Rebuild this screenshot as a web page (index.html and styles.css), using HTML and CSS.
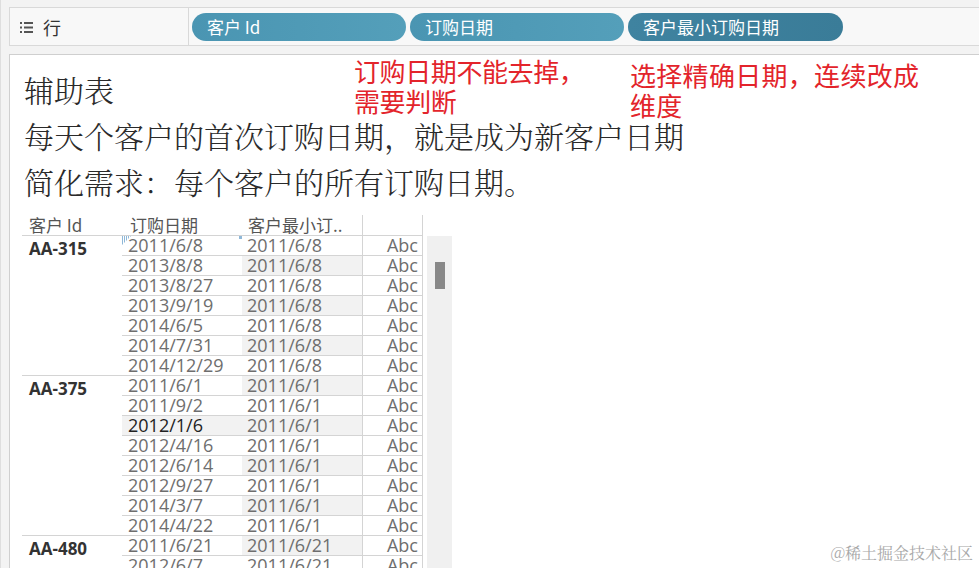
FILE: index.html
```html
<!DOCTYPE html>
<html lang="zh">
<head>
<meta charset="utf-8">
<link rel="stylesheet" href="styles.css">
</head>
<body>
<div class="app">
  <div class="shelf">
    <div class="shelf-label">
      <svg class="list-icon" width="13" height="11" viewBox="0 0 13 11">
        <rect x="0" y="0" width="2" height="2" fill="#555"/>
        <rect x="4" y="0" width="9" height="2" fill="#555"/>
        <rect x="0" y="4.5" width="2" height="2" fill="#555"/>
        <rect x="4" y="4.5" width="9" height="2" fill="#555"/>
        <rect x="0" y="9" width="2" height="2" fill="#555"/>
        <rect x="4" y="9" width="9" height="2" fill="#555"/>
      </svg>
      <span class="shelf-title">行</span>
    </div>
    <div class="pills">
      <div class="pill">客户 Id</div>
      <div class="pill">订购日期</div>
      <div class="pill dark">客户最小订购日期</div>
    </div>
  </div>

  <div class="panel">
    <div class="notes">
      <div class="note-line">辅助表</div>
      <div class="note-line">每天个客户的首次订购日期，就是成为新客户日期</div>
      <div class="note-line">简化需求：每个客户的所有订购日期。</div>
    </div>

    <div class="anno anno-1">订购日期不能去掉，<br>需要判断</div>
    <div class="anno anno-2">选择精确日期，连续改成<br>维度</div>

    <div class="view">
      <div class="table">
        <div class="thead">
          <div class="th c1">客户 Id</div>
          <div class="th c2">订购日期</div>
          <div class="th c3">客户最小订..</div>
          <div class="th c4"></div>
        </div>

        <div class="group">
          <div class="gkey">AA-315</div>
          <div class="rows">
            <div class="row"><div class="td c2 sel">2011/6/8<svg class="mark-l" width="9" height="9" viewBox="0 0 9 9"><defs><pattern id="h" width="2" height="2" patternUnits="userSpaceOnUse"><rect width="1" height="2" fill="#8fb8d8"/></pattern></defs><polygon points="0,0 9,0 0,9" fill="url(#h)"/></svg><span class="mark-r"></span></div><div class="td c3">2011/6/8</div><div class="td c4">Abc</div></div>
            <div class="row even"><div class="td c2">2013/8/8</div><div class="td c3">2011/6/8</div><div class="td c4">Abc</div></div>
            <div class="row"><div class="td c2">2013/8/27</div><div class="td c3">2011/6/8</div><div class="td c4">Abc</div></div>
            <div class="row even"><div class="td c2">2013/9/19</div><div class="td c3">2011/6/8</div><div class="td c4">Abc</div></div>
            <div class="row"><div class="td c2">2014/6/5</div><div class="td c3">2011/6/8</div><div class="td c4">Abc</div></div>
            <div class="row even"><div class="td c2">2014/7/31</div><div class="td c3">2011/6/8</div><div class="td c4">Abc</div></div>
            <div class="row"><div class="td c2">2014/12/29</div><div class="td c3">2011/6/8</div><div class="td c4">Abc</div></div>
          </div>
        </div>

        <div class="group">
          <div class="gkey">AA-375</div>
          <div class="rows">
            <div class="row even"><div class="td c2">2011/6/1</div><div class="td c3">2011/6/1</div><div class="td c4">Abc</div></div>
            <div class="row"><div class="td c2">2011/9/2</div><div class="td c3">2011/6/1</div><div class="td c4">Abc</div></div>
            <div class="row even hover"><div class="td c2">2012/1/6</div><div class="td c3">2011/6/1</div><div class="td c4">Abc</div></div>
            <div class="row"><div class="td c2">2012/4/16</div><div class="td c3">2011/6/1</div><div class="td c4">Abc</div></div>
            <div class="row even"><div class="td c2">2012/6/14</div><div class="td c3">2011/6/1</div><div class="td c4">Abc</div></div>
            <div class="row"><div class="td c2">2012/9/27</div><div class="td c3">2011/6/1</div><div class="td c4">Abc</div></div>
            <div class="row even"><div class="td c2">2014/3/7</div><div class="td c3">2011/6/1</div><div class="td c4">Abc</div></div>
            <div class="row"><div class="td c2">2014/4/22</div><div class="td c3">2011/6/1</div><div class="td c4">Abc</div></div>
          </div>
        </div>

        <div class="group">
          <div class="gkey">AA-480</div>
          <div class="rows">
            <div class="row even"><div class="td c2">2011/6/21</div><div class="td c3">2011/6/21</div><div class="td c4">Abc</div></div>
            <div class="row"><div class="td c2">2012/6/7</div><div class="td c3">2011/6/21</div><div class="td c4">Abc</div></div>
          </div>
        </div>
      </div>
      <div class="scroll"><div class="thumb"></div></div>
    </div>
    <div class="watermark">@稀土掘金技术社区</div>
  </div>
</div>
</body>
</html>
```
FILE: styles.css
```css
* { box-sizing: border-box; }
html, body {
  margin: 0;
  padding: 0;
  width: 979px;
  height: 568px;
  overflow: hidden;
  background: #f3f3f3;
}
.app {
  height: 568px;
  border-left: 1px solid #dedede;
  padding-top: 7px;
  font-family: "Noto Sans CJK SC", "Noto Sans", sans-serif;
}
.shelf {
  margin-left: 8px;
  height: 39px;
  display: flex;
  background: #f8f8f8;
  border-top: 1px solid #d9d9d9;
  border-bottom: 1px solid #d9d9d9;
  border-left: 1px solid #d9d9d9;
}
.shelf-label {
  width: 179px;
  border-right: 1px solid #d9d9d9;
  display: flex;
  align-items: center;
  padding-left: 10px;
}
.list-icon { margin-right: 10px; margin-top: 1px; }
.shelf-title {
  font-size: 18px;
  color: #333;
  line-height: 20px;
}
.pills {
  display: flex;
  align-items: center;
  gap: 4px;
  padding-left: 3px;
}
.pill {
  width: 214px;
  height: 28px;
  border-radius: 14px;
  background: linear-gradient(to right, #4a95b2, #549fba);
  color: #fff;
  font-size: 17px;
  line-height: 28px;
  padding-left: 15px;
}
.pill.dark {
  width: 215px;
  background: linear-gradient(to right, #3f83a0, #3a7c98);
}
.panel {
  position: relative;
  margin-top: 8px;
  margin-left: 8px;
  height: 520px;
  background: #fff;
  border-top: 1px solid #cfcfcf;
  border-left: 1px solid #cfcfcf;
  padding-top: 11px;
}
.notes {
  padding-left: 14px;
  font-family: "Noto Serif CJK SC", "Source Han Serif SC", "Noto Sans CJK SC", serif;
  font-size: 30px;
  line-height: 46px;
  color: #2a2a2a;
  font-weight: 300;
}
.note-line { width: fit-content; }
.anno {
  position: absolute;
  color: #e3242b;
  font-size: 26px;
  line-height: 30px;
  font-family: "Noto Sans CJK SC", sans-serif;
}
.anno-1 { left: 344px; top: 1px; letter-spacing: -0.4px; }
.anno-2 { left: 620px; top: 5px; letter-spacing: 0.3px; }

.view {
  display: flex;
  margin-top: 11px;
  padding-left: 12px;
  gap: 4px;
}
.table { width: 401px; }
.thead {
  display: grid;
  grid-template-columns: 100px 120px 120px 61px;
  height: 20px;
  font-size: 17px;
  color: #555;
  line-height: 19px;
}
.th { white-space: nowrap; }
.th.c1 { padding-left: 7px; }
.th.c2 { padding-left: 8px; }
.th.c3 { padding-left: 6px; }
.th.c4 { border-left: 1px solid #d4d4d4; border-right: 1px solid #d4d4d4; }
.group {
  display: grid;
  grid-template-columns: 100px 301px;
}
.gkey {
  border-top: 1px solid #d4d4d4;
  padding-left: 7px;
  padding-top: 3px;
  font-family: "Open Sans", "Liberation Sans", sans-serif;
  font-size: 17px;
  font-weight: 700;
  line-height: 20px;
  color: #333;
}
.row {
  display: grid;
  grid-template-columns: 120px 120px 61px;
  height: 20px;
  border-top: 1px solid #d4d4d4;
  font-family: "Open Sans", "Liberation Sans", sans-serif;
  font-size: 18px;
  line-height: 19px;
  color: #6e6e6e;
}
.td { white-space: nowrap; position: relative; }
.td.c2 { padding-left: 6px; }
.td.c3 { padding-left: 5px; }
.td.c4 {
  text-align: right;
  padding-right: 4px;
  border-left: 1px solid #d4d4d4;
  border-right: 1px solid #d4d4d4;
}
.row.even .c3 { background: #f2f2f2; }
.row.hover .c2 { background: #f2f2f2; color: #222; }
.mark-l { position: absolute; left: 0; top: 0; }
.mark-r {
  position: absolute;
  right: 0;
  top: 0;
  width: 3px;
  height: 3px;
  background: #8fb8d8;
}
.scroll {
  width: 25px;
  height: 340px;
  margin-top: 21px;
  background: #f0f0f0;
  padding-left: 8px;
  padding-top: 26px;
}
.thumb {
  width: 10px;
  height: 27px;
  background: #888;
}
.watermark {
  position: absolute;
  right: 6px;
  top: 486px;
  font-family: "Noto Serif CJK SC", "Liberation Serif", serif;
  font-size: 16px;
  color: #a8a8a8;
}
```
